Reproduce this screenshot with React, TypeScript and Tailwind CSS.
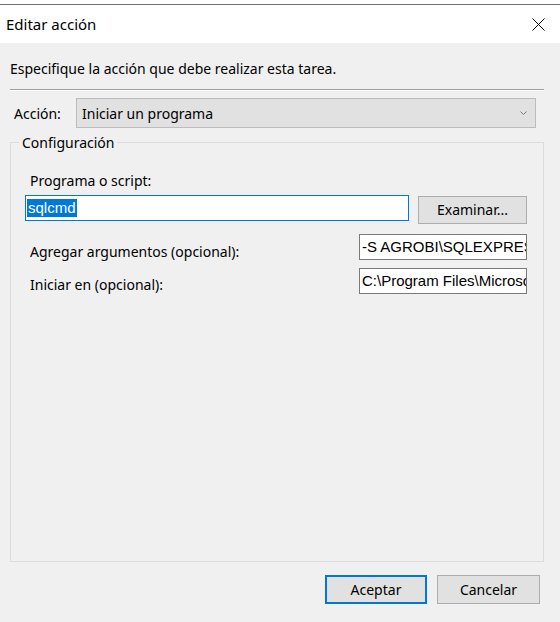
import React from "react";

const ui = { fontFamily: '"Noto Sans", "Open Sans", sans-serif' };
const box = { fontFamily: '"Liberation Sans", Arial, sans-serif' };

const App = () => {
  return (
    <div className="w-[560px] h-[622px] bg-[#f0f0f0] flex flex-col text-black text-[14px]" style={ui}>
      {/* window edge */}
      <div className="h-1 bg-white" />
      <div className="h-px bg-[#707070]" />

      {/* title bar */}
      <div className="h-[38px] bg-white flex items-center justify-between pl-[6px] pr-[15px]">
        <span className="text-[15px] leading-5 -mt-px">Editar acción</span>
        <svg width="13" height="13" viewBox="0 0 13 13" className="mt-px">
          <path d="M0.5 0.5 L12.5 12.5 M12.5 0.5 L0.5 12.5" stroke="#000" strokeWidth="1" fill="none" />
        </svg>
      </div>

      {/* body */}
      <div className="flex-1 flex flex-col px-[10px]">
        <p className="mt-[16px] leading-5 h-5">Especifique la acción que debe realizar esta tarea.</p>
        <div className="mt-[10px] w-[534px] border-t border-[#a0a0a0] border-b border-b-white" />

        {/* action row */}
        <div className="mt-[7px] flex items-center">
          <span className="w-[66px] pl-[4px] leading-5 mt-px">Acción:</span>
          <div className="w-[460px] h-[30px] bg-[#e1e1e1] border border-[#bcbcbc] flex items-center justify-between pl-[5px] pr-[8px]">
            <span className="leading-5 mt-px">Iniciar un programa</span>
            <svg width="7" height="4" viewBox="0 0 7 4">
              <path d="M0.5 0.5 L3.5 3.5 L6.5 0.5" stroke="#7a7a7a" strokeWidth="1" fill="none" />
            </svg>
          </div>
        </div>

        {/* group box */}
        <div className="relative mt-[14px] w-[534px] h-[420px] border border-[#dcdcdc] flex flex-col">
          <span className="absolute -top-[10px] left-[8px] px-[3px] bg-[#f0f0f0] leading-5">Configuración</span>

          <span className="mt-[28px] ml-[19px] leading-5">Programa o script:</span>

          <div className="mt-[4px] flex items-start ml-[14px]">
            <div className="w-[384px] h-[26px] bg-white border border-[#0078d7] flex items-center pl-px text-[15px] overflow-hidden whitespace-nowrap" style={box}>
              <span className="bg-[#0078d7] text-white leading-[18px] px-px">sqlcmd</span>
            </div>
            <button className="mt-px ml-[9px] w-[109px] h-[28px] bg-[#e1e1e1] border border-[#adadad] leading-5">
              Examinar...
            </button>
          </div>

          <div className="mt-[10px] h-[26px] flex items-start ml-[19px] w-[497px]">
            <span className="mt-[8px] leading-5">Agregar argumentos (opcional):</span>
            <div className="ml-auto w-[168px] h-[26px] bg-white border border-[#7a7a7a] flex items-center pl-[2px] text-[15px] overflow-hidden whitespace-nowrap" style={box}>
              -S AGROBI\SQLEXPRESS
            </div>
          </div>

          <div className="mt-[8px] h-[26px] flex items-start ml-[19px] w-[497px]">
            <span className="mt-[7px] leading-5">Iniciar en (opcional):</span>
            <div className="ml-auto w-[168px] h-[26px] bg-white border border-[#7a7a7a] flex items-center pl-[2px] text-[15px] overflow-hidden whitespace-nowrap" style={box}>
              C:\Program Files\Microsoft SQL Server
            </div>
          </div>
        </div>

        {/* buttons */}
        <div className="mt-[13px] flex justify-end gap-[10px] pr-[10px]">
          <button className="w-[102px] h-[29px] bg-[#e1e1e1] border-2 border-[#0078d7] leading-5">Aceptar</button>
          <button className="w-[103px] h-[29px] bg-[#e1e1e1] border border-[#adadad] leading-5">Cancelar</button>
        </div>
      </div>
    </div>
  );
};

export default App;
